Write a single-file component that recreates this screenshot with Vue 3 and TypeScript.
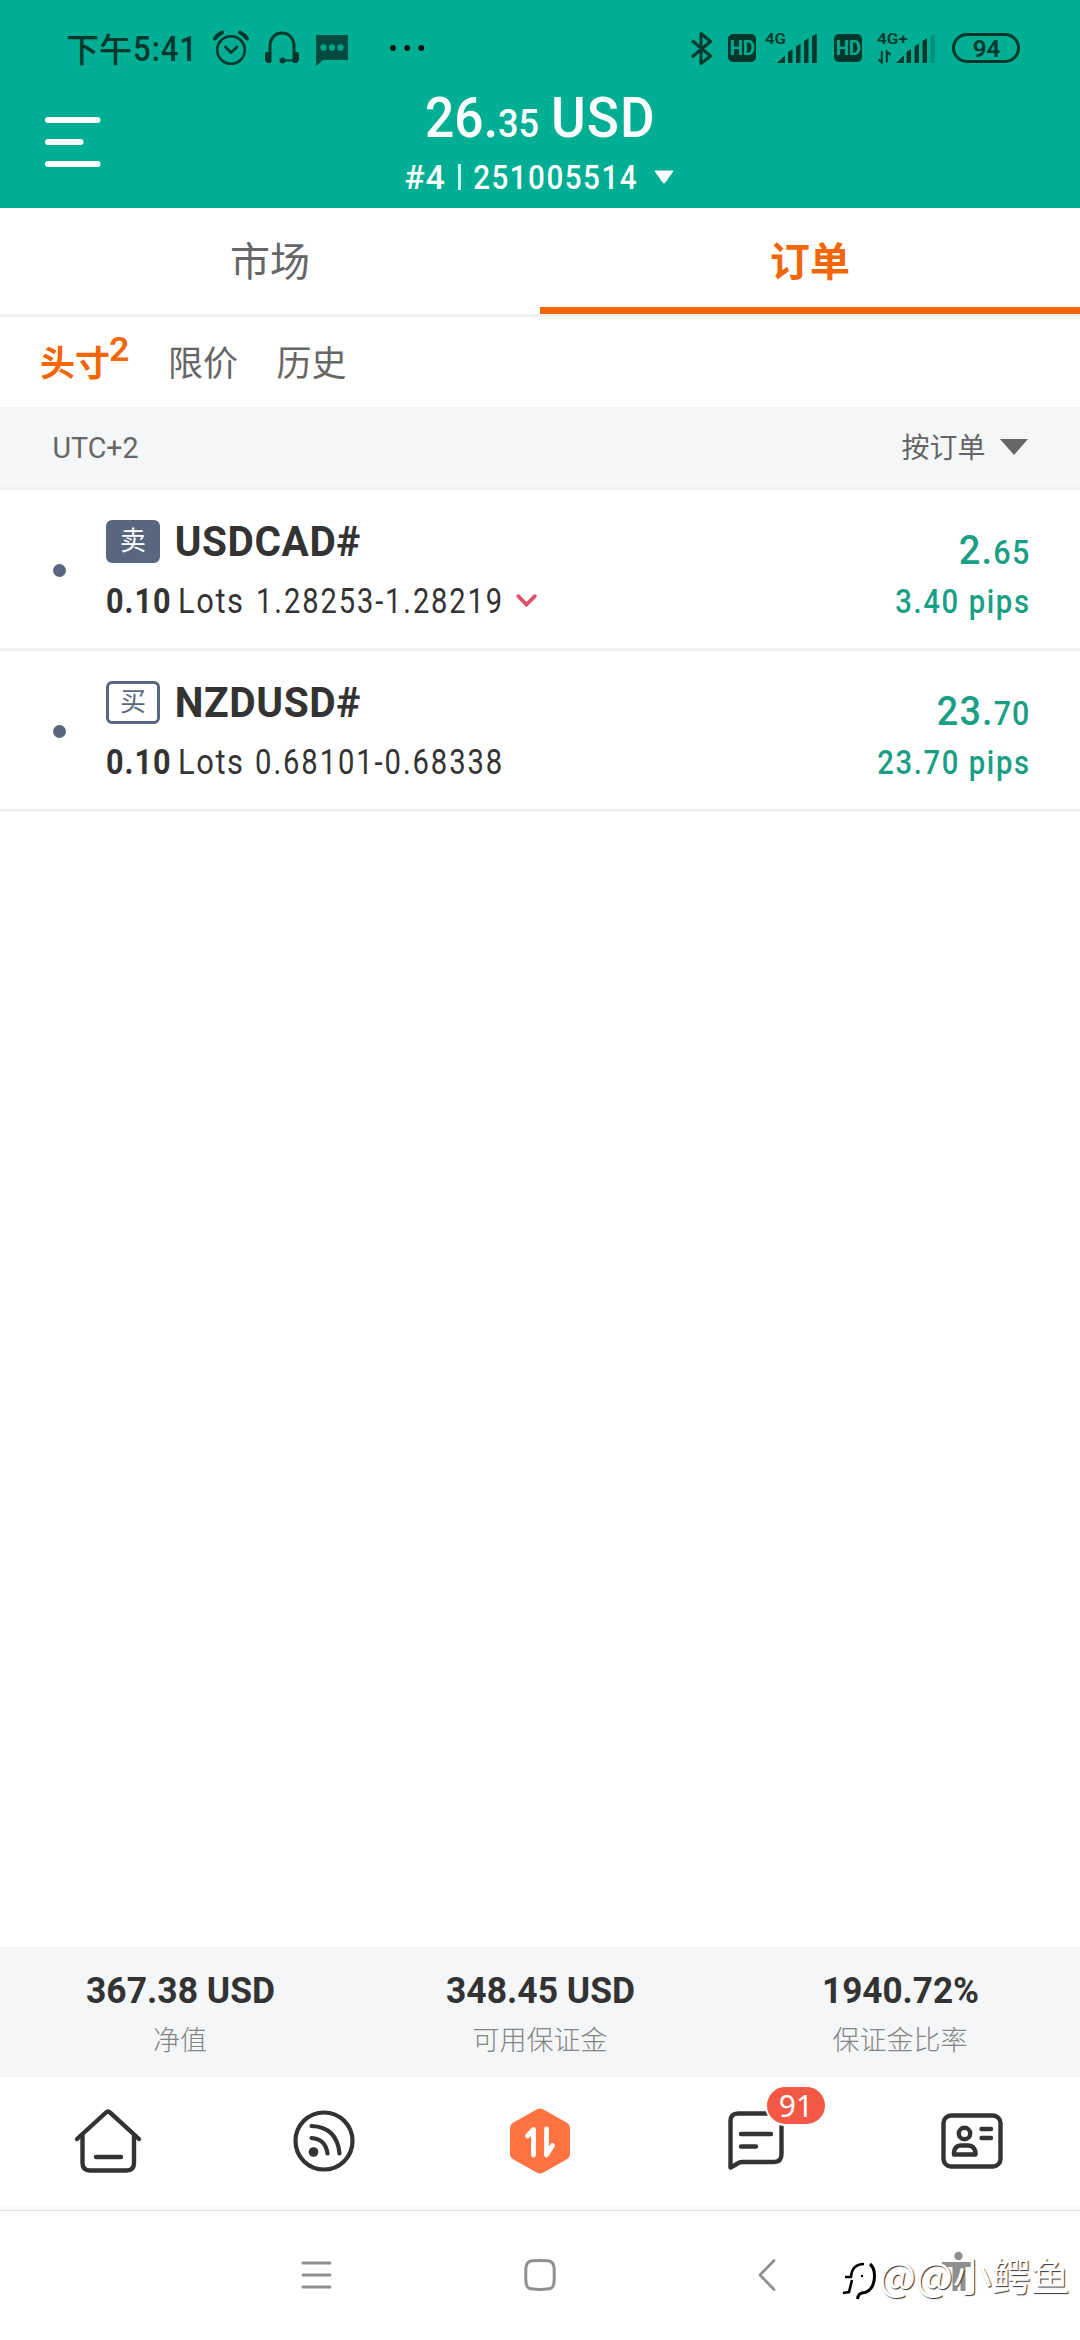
<script setup lang="ts">
import { h } from 'vue'

interface FitProps {
  text: string
  w: number
  cap: number
  weight?: number
  spacing?: number
  cents?: string
  centsCap?: number
}

// Narrow numeral text: the box is the cap height by the ink width.
// spacing is the tracking between glyphs, in em; cents follow in a smaller size.
const Fit = (p: FitProps) => {
  const size = p.cap / 0.711
  const bearing = size * 0.055
  const track = (p.spacing ?? 0) * size
  const tail = p.cents
    ? [h('tspan', { 'font-size': (p.centsCap ?? p.cap) / 0.711 }, p.cents)]
    : []
  return h('svg', { class: 'fit', width: p.w, height: p.cap }, [
    h(
      'text',
      {
        x: -bearing,
        y: p.cap,
        'font-size': size,
        'font-weight': p.weight ?? 400,
        'letter-spacing': track,
        textLength: p.w + bearing * 2 + track,
        lengthAdjust: 'spacingAndGlyphs',
        fill: 'currentColor',
      },
      [p.text, ...tail],
    ),
  ])
}
Fit.props = ['text', 'w', 'cap', 'weight', 'spacing', 'cents', 'centsCap']

interface Order {
  side: string
  filled: boolean
  symbol: string
  symbolW: number
  prices: string
  pricesW: number
  pricesGap: number
  down: boolean
  whole: string
  cents: string
  profitW: number
  pips: string
  pipsW: number
}

const orders: Order[] = [
  {
    side: '卖', filled: true, symbol: 'USDCAD#', symbolW: 181,
    prices: '1.28253-1.28219', pricesW: 242, pricesGap: 17, down: true,
    whole: '2.', cents: '65', profitW: 66, pips: '3.40 pips', pipsW: 130,
  },
  {
    side: '买', filled: false, symbol: 'NZDUSD#', symbolW: 181,
    prices: '0.68101-0.68338', pricesW: 243, pricesGap: 16, down: false,
    whole: '23.', cents: '70', profitW: 88, pips: '23.70 pips', pipsW: 148,
  },
]

const summary = [
  { value: '367.38 USD', w: 185, label: '净值' },
  { value: '348.45 USD', w: 185, label: '可用保证金' },
  { value: '1940.72%', w: 153, label: '保证金比率' },
]
</script>

<template>
  <div class="screen">
    <header class="header">
      <div class="status">
        <span class="time-cjk">下午</span>
        <Fit class="time-num" text="5:41" :w="60" :cap="24.5" :weight="500" :spacing="0.03" />
        <svg class="i-alarm" width="36" height="36" viewBox="0 0 36 36" fill="none" stroke="currentColor">
          <circle cx="18" cy="20" r="13.8" stroke-width="2.6" />
          <path d="M12.5 17l5.5 5.5 6-5.5" stroke-width="2.8" stroke-linecap="round" stroke-linejoin="round" />
          <path d="M2 8.5Q4.5 4.500 9 2.500M34 8.500Q31.500 4.500 27 2.500" stroke-width="4" stroke-linecap="round" />
        </svg>
        <svg class="i-head" width="36" height="34" viewBox="0 0 36 34" fill="none" stroke="currentColor">
          <path d="M6 31V15C6 7.500 11 2 18 2s12 5.500 12 13v16" stroke-width="3" />
          <path d="M18 29.500h12" stroke-width="2" />
          <path d="M1 23q0-2 2-2h4v11H4q-3-1-3-4zM35 23q0-2-2-2h-4v11h3q3-1 3-4z" fill="currentColor" stroke="none" />
          <circle cx="18.500" cy="29.500" r="3" fill="currentColor" stroke="none" />
        </svg>
        <svg class="i-chat" width="34" height="32" viewBox="0 0 34 32">
          <path d="M1 1h32v25H8l-7 6z" fill="#024b3e" />
          <g fill="#00a489"><circle cx="8.500" cy="13.500" r="3.200" /><circle cx="17" cy="13.500" r="3.200" /><circle cx="25.500" cy="13.500" r="3.200" /></g>
        </svg>
        <svg class="i-dots" width="36" height="8" viewBox="0 0 36 8" fill="#02120f">
          <circle cx="4" cy="4" r="2.900" /><circle cx="18.200" cy="4" r="2.900" /><circle cx="32.300" cy="4" r="2.900" />
        </svg>
        <div class="status-right">
          <svg width="21" height="35" viewBox="0 0 21 35" fill="none" stroke="currentColor" stroke-width="3" stroke-linejoin="round">
            <path d="M1 9.500L19.500 25 10 32.500V2.500L19.500 10.500 1 26" />
          </svg>
          <span class="hd"><Fit text="HD" :w="23" :cap="14" :weight="700" /></span>
          <svg class="signal" width="54" height="32" viewBox="0 0 54 32" fill="currentColor">
            <text x="0" y="12" font-size="15.500" font-weight="600" textLength="21" lengthAdjust="spacingAndGlyphs">4G</text>
            <path d="M12 31l8-7.500V31zM23 20l4.500-3V31H23zM31 14.500l4.500-3V31H31zM39 9l4.500-3V31H39zM47 4.500l4.800-3V31H47z" />
          </svg>
          <span class="hd hd2"><Fit text="HD" :w="23" :cap="14" :weight="700" /></span>
          <svg class="signal2" width="60" height="32" viewBox="0 0 60 32" fill="currentColor">
            <text x="0" y="12" font-size="15.500" font-weight="600" textLength="31" lengthAdjust="spacingAndGlyphs">4G+</text>
            <path d="M4.800 19v11.500L1.500 27.500M9.800 30.500V19.500l3.700 3.500" fill="none" stroke="currentColor" stroke-width="2" />
            <path d="M19 31l8-7.500V31zM29.500 20l4.500-3V31h-4.500zM37.500 14.500l4.500-3V31h-4.500zM45.500 9l4.500-3V31h-4.500z" />
            <path d="M53.500 4.500l4.500-3V31h-4.500z" opacity=".22" />
          </svg>
          <span class="battery"><Fit text="94" :w="25" :cap="17" :weight="600" /></span>
        </div>
      </div>
      <div class="account">
        <svg class="menu" width="56" height="50" viewBox="0 0 56 50" stroke="currentColor" stroke-width="6" stroke-linecap="round">
          <path d="M3 3h49.500M3 25h32.500M3 47h49.500" />
        </svg>
        <div class="account-info">
          <div class="balance">
            <Fit text="26." cents="35" :cents-cap="27.500" :w="108" :cap="39.300" :weight="500" />
            <Fit class="usd" text="USD" :w="97.500" :cap="39.300" :weight="500" :spacing="0.02" />
          </div>
          <div class="login">
            <Fit text="#4" :w="37" :cap="24" :weight="500" :spacing="0.03" />
            <i class="bar" />
            <Fit text="251005514" :w="159.500" :cap="24" :weight="500" :spacing="0.05" />
            <svg class="caret" width="20" height="14" viewBox="0 0 20 14"><path d="M1 1h18l-8 11.500q-1 1-2 0z" fill="currentColor" stroke="currentColor" stroke-linejoin="round" /></svg>
          </div>
        </div>
      </div>
    </header>

    <nav class="tabs">
      <span class="tab">市场</span>
      <span class="tab on">订单</span>
    </nav>

    <nav class="subtabs">
      <span class="sub on">头寸</span>
      <Fit class="count" text="2" :w="16.500" :cap="23.500" :weight="600" />
      <span class="sub s2">限价</span>
      <span class="sub s3">历史</span>
    </nav>

    <div class="sortbar">
      <Fit text="UTC+2" :w="83" :cap="20.500" />
      <span class="sort">按订单</span>
      <svg width="28" height="16" viewBox="0 0 28 16"><path d="M0 0h28L14 16z" fill="currentColor" /></svg>
    </div>

    <main class="orders">
      <article v-for="o in orders" :key="o.symbol" class="order">
        <i class="dot" />
        <div class="left">
          <div class="name">
            <span class="side" :class="{ filled: o.filled }">{{ o.side }}</span>
            <Fit :text="o.symbol" :w="o.symbolW" :cap="30.300" :weight="700" :spacing="0.015" />
          </div>
          <div class="detail">
            <Fit text="0.10" :w="60.500" :cap="24.300" :weight="700" :spacing="0.03" />
            <Fit class="lots" text="Lots" :w="61" :cap="24.300" :spacing="0.05" />
            <Fit :text="o.prices" :w="o.pricesW" :cap="24.300" :spacing="0.065" :style="{ marginLeft: o.pricesGap + 'px' }" />
            <svg v-if="o.down" class="chev" width="21" height="14" viewBox="0 0 21 14" fill="none" stroke="#e0526c" stroke-width="3.800" stroke-linecap="round"><path d="M2.200 2.200l8.300 8.300 8.300-8.300" /></svg>
          </div>
        </div>
        <div class="right">
          <Fit :text="o.whole" :cents="o.cents" :cents-cap="23.300" :w="o.profitW" :cap="29" :weight="500" :spacing="0.03" />
          <Fit :text="o.pips" :w="o.pipsW" :cap="23.500" :weight="500" :spacing="0.055" />
        </div>
      </article>
    </main>

    <section class="summary">
      <div v-for="s in summary" :key="s.label" class="cell">
        <Fit :text="s.value" :w="s.w" :cap="26" :weight="700" />
        <span class="label">{{ s.label }}</span>
      </div>
    </section>

    <nav class="tabbar">
      <span class="item">
        <svg width="68" height="66" viewBox="0 0 68 66" fill="none" stroke="currentColor" stroke-width="4.400" stroke-linecap="round" stroke-linejoin="round">
          <path d="M3 31L32 4.500q2-1.800 4 0L65 31" />
          <path d="M8.500 27v28q0 7.500 7.500 7.500h36.500q7.500 0 7.500-7.500V27M22 49h25" />
        </svg>
      </span>
      <span class="item">
        <svg width="62" height="62" viewBox="0 0 62 62" fill="none" stroke="currentColor" stroke-width="4.200" stroke-linecap="round">
          <circle cx="31" cy="31" r="28.500" />
          <path d="M18.500 28Q32.500 29 34.500 43.500M18.500 16Q44 17 46.500 43.500" />
          <circle cx="20.500" cy="42" r="4.800" fill="currentColor" stroke="none" />
        </svg>
      </span>
      <span class="item">
        <svg width="60" height="66" viewBox="0 0 60 66" stroke-linejoin="round" stroke-linecap="round">
          <path d="M30 7.500L53 20.500V45.500L30 58.500L7 45.500V20.500z" fill="#ff7342" stroke="#ff7342" stroke-width="14" />
          <path d="M23.500 47V21.500L17.500 28M36.500 21V47L42.500 37.500" fill="none" stroke="#fff" stroke-width="4.800" />
        </svg>
      </span>
      <span class="item">
        <svg width="56" height="60" viewBox="0 0 56 60" fill="none" stroke="currentColor" stroke-width="4.400" stroke-linecap="round" stroke-linejoin="round">
          <path d="M2.500 56.500V10Q2.500 2.500 10 2.500H46Q53.500 2.500 53.500 10V43Q53.500 51 46 51H14Q11 51 8 53.500zM13 23h30M13 35.500h15" />
        </svg>
        <b class="badge"><i>91</i></b>
      </span>
      <span class="item">
        <svg width="62" height="56" viewBox="0 0 62 56" fill="none" stroke="currentColor" stroke-width="4.400" stroke-linecap="round" stroke-linejoin="round">
          <rect x="2.500" y="2.500" width="57" height="51" rx="7.500" />
          <circle cx="23.500" cy="20.500" r="5.700" />
          <path d="M13 41.500V39q1-6.500 7-6.500h7q6 0 7.500 6.500v2.500zM40.500 16h9.500M40.500 25h9.500" />
        </svg>
      </span>
    </nav>

    <footer class="sysnav">
      <svg class="recent" width="31" height="32" viewBox="0 0 31 32" fill="none" stroke="currentColor" stroke-width="3" stroke-linecap="round"><path d="M2 4h27M2 16h27M2 28h27" /></svg>
      <svg class="home" width="32" height="32" viewBox="0 0 32 32" fill="none" stroke="currentColor" stroke-width="3"><path d="M16 1.600c11 0 13 .4 14 6.400q.5 8 0 16c-1 6-3 6.400-14 6.400S3 30 2 24q-.5-8 0-16c1-6 3-6.400 14-6.400z" /></svg>
      <svg class="back" width="18" height="34" viewBox="0 0 18 34" fill="none" stroke="currentColor" stroke-width="2.800" stroke-linecap="round" stroke-linejoin="round"><path d="M16 2.500L2 17l14 14.500" /></svg>
      <svg class="person" width="34" height="42" viewBox="0 0 34 42" fill="currentColor"><circle cx="17.500" cy="5" r="4.200" /><path d="M1 11h31v5h-7.500v24h-5V28h-3v12h-5V16H1z" /></svg>
      <div class="watermark">
        <svg width="36" height="40" viewBox="0 0 36 40" fill="none" stroke="#000" stroke-linecap="butt">
          <path d="M3 18h6Q10 5 22 5M1 34l6-1 3-12" stroke-width="2.600" />
          <path d="M28 5Q34 10 32 22 30 33 20 34 16 35 15.500 40" stroke-width="3" />
          <circle cx="20" cy="17" r="1.200" fill="#000" stroke="none" />
        </svg>
        <span>@@小鳄鱼</span>
      </div>
    </footer>
  </div>
</template>

<style>
body {
  margin: 0;
}
</style>

<style scoped>
.screen {
  width: 1080px;
  height: 2340px;
  overflow: hidden;
  display: flex;
  flex-direction: column;
  background: #fff;
  color: #333;
  font-family: Roboto, "Noto Sans CJK SC", sans-serif;
}
svg {
  display: block;
  flex: none;
  overflow: visible;
}
.header {
  height: 208px;
  flex: none;
  background: #00ae93;
  color: #fff;
}
.status {
  height: 96px;
  display: flex;
  align-items: center;
  padding-left: 66px;
  color: #03372d;
}
.time-cjk {
  font: 500 33px/40px "Noto Sans CJK SC", sans-serif;
  width: 69px;
}
.i-alarm { margin-left: 18px; }
.i-head { margin-left: 15px; }
.i-chat { margin-left: 15px; margin-top: 4px; }
.i-dots { margin-left: 40px; }
.status-right {
  margin-left: auto;
  padding-right: 60px;
  display: flex;
  align-items: center;
}
.hd {
  width: 28px;
  height: 28px;
  margin-left: 16px;
  border-radius: 5px;
  background: #03372d;
  color: #00ae93;
  display: flex;
  align-items: center;
  justify-content: center;
}
.signal { margin-left: 9px; }
.hd2 { margin-left: 15px; }
.signal2 { margin-left: 15px; }
.battery {
  box-sizing: border-box;
  width: 68px;
  height: 30px;
  margin-left: 15px;
  border: 3px solid #03372d;
  border-radius: 15px;
  display: flex;
  align-items: center;
  justify-content: center;
}
.account {
  display: grid;
  grid-template-columns: 1fr auto 1fr;
}
.menu {
  margin: 21px 0 0 45px;
}
.account-info {
  padding-top: 1.5px;
  display: flex;
  flex-direction: column;
  align-items: center;
}
.balance {
  display: flex;
  align-items: flex-end;
}
.usd { margin-left: 18px; }
.login {
  display: flex;
  align-items: center;
  margin-top: 27px;
}
.bar {
  width: 3px;
  height: 26px;
  margin: 0 14px 0 15px;
  background: #c8fff5;
}
.caret { margin-left: 20px; }
.tabs {
  height: 109px;
  flex: none;
  box-sizing: border-box;
  border-bottom: 3px solid #f0f0f0;
  display: flex;
}
.tab {
  flex: 1;
  height: 99px;
  text-align: center;
  font-size: 40px;
  line-height: 109px;
  color: #666;
}
.tab.on {
  font-weight: 600;
  color: #f26608;
  border-bottom: 7px solid #f26608;
}
.subtabs {
  height: 90px;
  flex: none;
  display: flex;
  padding-left: 40px;
}
.sub {
  font-size: 35px;
  line-height: 95px;
  color: #666;
}
.sub.on {
  font-weight: 600;
  color: #f26608;
}
.count {
  margin: 20px 0 0 1px;
  color: #f26608;
}
.s2 { margin-left: 40.500px; }
.s3 { margin-left: 38.500px; }
.sortbar {
  height: 83px;
  flex: none;
  box-sizing: border-box;
  border-bottom: 4px solid #f3f3f3;
  background: #f4f6f8;
  color: #666;
  display: flex;
  align-items: center;
  padding: 1px 52.500px 0 54px;
}
.sort {
  margin: -2px 14px 0 auto;
  font-size: 28px;
}
.orders { flex: 1; }
.order {
  height: 161px;
  box-sizing: border-box;
  border-bottom: 3px solid #f0f0f0;
  display: flex;
  padding: 30px 53.5px 0 53px;
}
.dot {
  width: 13px;
  height: 13px;
  margin-top: 44px;
  border-radius: 50%;
  background: #58677f;
}
.left { margin-left: 40px; }
.name {
  display: flex;
  align-items: center;
  height: 43px;
}
.side {
  box-sizing: border-box;
  width: 54px;
  height: 43px;
  margin-right: 16.500px;
  border: 3px solid #58677f;
  border-radius: 6px;
  color: #58677f;
  font-size: 26px;
  line-height: 37px;
  text-align: center;
}
.side.filled {
  background: #58677f;
  color: #fff;
}
.detail {
  display: flex;
  margin: 26px 0 0 1.500px;
}
.lots { margin-left: 11.500px; }
.chev { margin: 5px 0 0 16px; }
.right {
  margin: 15px 0 0 auto;
  color: #1a9f86;
  display: flex;
  flex-direction: column;
  align-items: flex-end;
  gap: 24.500px;
}
.summary {
  height: 130px;
  flex: none;
  background: #f4f6f8;
  display: flex;
}
.cell {
  flex: 1;
  padding-top: 30px;
  display: flex;
  flex-direction: column;
  align-items: center;
}
.label {
  margin-top: 18px;
  font-size: 27px;
  line-height: 40px;
  font-weight: 300;
  color: #858585;
}
.tabbar {
  height: 129px;
  flex: none;
  display: flex;
}
.item {
  position: relative;
  flex: 1;
  height: 128px;
  display: flex;
  align-items: center;
  justify-content: center;
}
.badge {
  position: absolute;
  left: 117px;
  top: 8px;
  width: 58px;
  height: 37px;
  border: 2px solid #fff;
  border-radius: 21px;
  background: #f35844;
  color: #fff;
  font: 400 30px/38px "Noto Sans", sans-serif;
  text-align: center;
}
.badge i { font-style: normal; }
.sysnav {
  position: relative;
  height: 134px;
  flex: none;
  box-sizing: border-box;
  border-top: 4px solid #f9f9f9;
  box-shadow: inset 0 1px #e0e0e0;
  color: #909090;
  display: flex;
  align-items: flex-start;
  padding-top: 49px;
}
.recent { margin: 0 0 0 301px; }
.home { margin-left: 192px; }
.back { margin: -1px 0 0 202px; }
.person { margin: -8px 0 0 165px; }
.watermark {
  position: absolute;
  left: 842px;
  top: 39px;
  display: flex;
  align-items: center;
}
.watermark svg { margin: 10px 1px 0 0; }
.watermark span {
  color: #fff;
  font: 400 39px/44px "Noto Sans CJK SC", sans-serif;
  text-shadow: 1px 1px 1px #333;
  white-space: nowrap;
}
</style>
